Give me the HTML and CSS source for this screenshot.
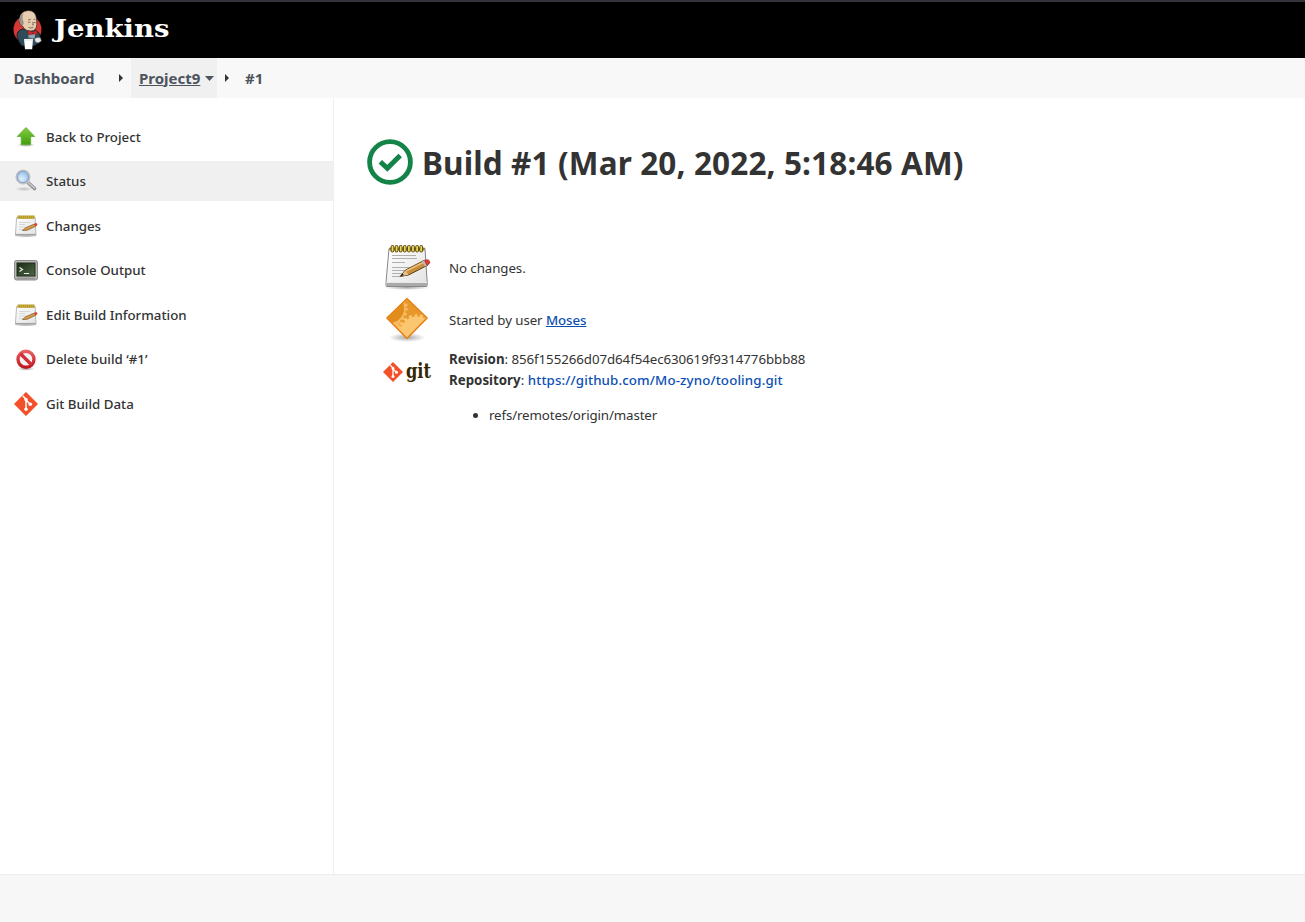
FILE: index.html
```
<!DOCTYPE html>
<html lang="en">
<head>
<meta charset="utf-8">
<title>Project9 #1 [Jenkins]</title>
<link rel="stylesheet" href="styles.css">
</head>
<body>
<svg class="defs" width="0" height="0" aria-hidden="true">
  <defs>
    <linearGradient id="paper" x1="0" y1="0" x2="1" y2="1"><stop offset="0" stop-color="#fff"/><stop offset="1" stop-color="#e2e2e2"/></linearGradient>
    <linearGradient id="green" x1="0" y1="0" x2="0" y2="1"><stop offset="0" stop-color="#84cf3c"/><stop offset="1" stop-color="#3f9c10"/></linearGradient>
    <radialGradient id="shadow"><stop offset="0" stop-color="#000" stop-opacity=".35"/><stop offset="1" stop-color="#000" stop-opacity="0"/></radialGradient>
    <linearGradient id="screen" x1="0" y1="0" x2="1" y2="1"><stop offset="0" stop-color="#1c2b18"/><stop offset="1" stop-color="#4e6846"/></linearGradient>
    <linearGradient id="red" x1="0" y1="0" x2="0" y2="1"><stop offset="0" stop-color="#e86060"/><stop offset="1" stop-color="#c01822"/></linearGradient>
    <radialGradient id="lens" cx=".4" cy=".65"><stop offset="0" stop-color="#e3effb"/><stop offset="1" stop-color="#a3c5ec"/></radialGradient>
    <clipPath id="diamond"><path d="M24 3.500L43 22 24 41.500 5 22z"/></clipPath>
    <symbol id="notepad" viewBox="0 0 24 24">
      <ellipse cx="12" cy="22" rx="12" ry="1.600" fill="url(#shadow)"/>
      <path d="M2.600 3.500h18.600l.8 17.800H1.400z" fill="url(#paper)" stroke="#aaa" stroke-width=".8"/>
      <path d="M1.600 20.500h20.200" stroke="#a3a3a3" stroke-width="1.200"/>
      <path d="M3.500 1.500h17v3.300h-17z" fill="#b59a24"/>
      <path d="M4.500 2v2.600M6.500 2v2.600M8.500 2v2.600M10.500 2v2.600M12.500 2v2.600M14.500 2v2.600M16.500 2v2.600M18.500 2v2.600" stroke="#cdb545" stroke-width=".7"/>
      <path d="M5 8.500h11M5 10.500h6M5 13h7M5 15.500h5" stroke="#d3d3d3" stroke-width=".9"/>
      <path d="M8.500 16.500l3.200-2.800 8.800-3.700 1.700 2-9 4.300z" fill="#d79a45" stroke="#7c5626" stroke-width=".7"/>
      <path d="M20 10l2-.9q1.700.7 1.400 1.900l-2 1.200z" fill="#dc3a32"/>
    </symbol>
  </defs>
</svg>
<header class="header">
  <svg class="butler" viewBox="0 0 40 50">
    <circle cx="19.500" cy="24.500" r="14" fill="#d33833"/>
    <path d="M9 31q0-6 6-7l12 1q5 2 5.500 8l-1.500 5-5 3H14l-3-4z" fill="#2f4a58" stroke="#151515" stroke-width=".8"/>
    <path d="M11.200 14q1-8 9-8.500 7.500 0 8.300 8l.3 6q-.3 6.500-5.800 6.500-6 .4-8.500-5-3.700-2-3.300-7z" fill="#e6cdb0" stroke="#2b2320" stroke-width=".7"/>
    <path d="M11.400 14q1-4 4-6-2 6 .5 9.500l-1.200 3.500q-3.500-2-3.300-7z" fill="#99938b"/>
    <path d="M20 15l3-.8m2.500.3l2-.3M20 17.200h2.500m3 .3h2M24.500 17l1 2.700-1.500.3M20.500 22.500q2.500 1 5 0" stroke="#5b483b" fill="none" stroke-width=".7"/>
    <path d="M20 29.500l4.500 0 3-1-1 5-6-1z" fill="#93a5b0"/>
    <path d="M20 25.300l4.500 2 4-2.200.6 4.800-4.400-1.300-4.700 1.500z" fill="#d8262a" stroke="#6c1915" stroke-width=".4"/>
    <path d="M16 34l9-.2-.8 10.500h-7.200z" fill="#fff"/><path d="M16.500 35h8" stroke="#c8c8c8" stroke-width=".6"/>
    <path d="M26.500 34q2.500-2.500 6-1l.8 3-2.800 1.700-3-.6z" fill="#e8e8e8" stroke="#777" stroke-width=".5"/>
  </svg>
  <span class="brand">Jenkins</span>
</header>
<nav class="crumbs">
  <a class="crumb home">Dashboard</a>
  <svg class="sep" viewBox="0 0 4 8"><path d="M0 0l4 4-4 4z"/></svg>
  <a class="crumb current"><span class="proj">Project9</span><svg class="caret" viewBox="0 0 9 5"><path d="M0 0h9L4.500 5z"/></svg></a>
  <svg class="sep s2" viewBox="0 0 4 8"><path d="M0 0l4 4-4 4z"/></svg>
  <a class="crumb num">#1</a>
</nav>
<div class="page">
  <aside class="side">
    <a class="task"><svg viewBox="0 0 24 24"><ellipse cx="12" cy="20" rx="9" ry="2" fill="url(#shadow)"/><path d="M12 2.500l8.700 9h-4v8.200H7.200v-8.200h-4z" fill="url(#green)" stroke="#5fa832" stroke-width=".8"/></svg><span>Back to Project</span></a>
    <a class="task active"><svg viewBox="0 0 24 24"><ellipse cx="10" cy="20" rx="9" ry="2.200" fill="url(#shadow)" opacity=".6"/><path d="M14.500 14l6 5.500" stroke="#8a8a8a" stroke-width="3.600" stroke-linecap="round"/><path d="M14.500 13.800l6 5.400" stroke="#c8c8c8" stroke-width="1.600" stroke-linecap="round"/><circle cx="9" cy="8" r="6.600" fill="url(#lens)" stroke="#c2c2c2" stroke-width="1.800"/><circle cx="9" cy="8" r="5.600" fill="none" stroke="#6d98cb" stroke-width=".8"/></svg><span>Status</span></a>
    <a class="task"><svg><use href="#notepad"/></svg><span>Changes</span></a>
    <a class="task"><svg viewBox="0 0 24 24"><rect x=".5" y="1.500" width="23" height="19.500" rx="2" fill="#b5b7b2" stroke="#777" stroke-width=".8"/><rect x="3" y="4" width="18" height="13" fill="url(#screen)" stroke="#20281c"/><path d="M5.500 8.500l3 2-3 2M10 14.500h5" fill="none" stroke="#eaf3e5" stroke-width="1.200"/><path d="M3 19.300h18" stroke="#8b8b8b"/></svg><span>Console Output</span></a>
    <a class="task"><svg><use href="#notepad"/></svg><span>Edit Build Information</span></a>
    <a class="task"><svg viewBox="0 0 24 24"><ellipse cx="12" cy="21" rx="9" ry="1.800" fill="url(#shadow)"/><circle cx="12" cy="11.300" r="8" fill="#f5f5f5" stroke="url(#red)" stroke-width="3.400"/><path d="M6.500 5.800l11 11" stroke="#d13038" stroke-width="3.400"/></svg><span>Delete build ‘#1’</span></a>
    <a class="task"><svg viewBox="0 0 24 24"><path d="M12 .3L23.700 12 12 23.700.3 12z" fill="#f34f29" stroke="#f34f29" stroke-width=".6" stroke-linejoin="round"/><path d="M8.700 3.800L12 7.100v10.400M12 8l4.300 4.300" fill="none" stroke="#fff" stroke-width="1.500"/><circle cx="12" cy="7.500" r="1.700" fill="#fff"/><circle cx="12" cy="17.300" r="1.800" fill="#fff"/><circle cx="16.300" cy="12.200" r="1.800" fill="#fff"/></svg><span>Git Build Data</span></a>
  </aside>
  <main class="main">
    <h1 class="title"><svg viewBox="0 0 46 46"><circle cx="23" cy="23" r="20.400" fill="none" stroke="#138347" stroke-width="4.800"/><path d="M13.300 22.700l7 6.600L33.200 16.500" fill="none" stroke="#138347" stroke-width="5"/></svg><span>Build #1 (Mar 20, 2022, 5:18:46 AM)</span></h1>
    <div class="rows">
      <div class="row"><svg viewBox="0 0 48 48">
        <ellipse cx="24" cy="43.500" rx="23" ry="2.500" fill="url(#shadow)"/>
        <path d="M6 4.500h36l2.200 34v3q0 1-1 1H4q-1 0-1-1v-3z" fill="url(#paper)" stroke="#888"/><path d="M3.500 38.500h40.500v3.500H3.500z" fill="#aaa"/><path d="M3.500 38.500h40.500" stroke="#e8e8e8"/>
        <path d="M6.500 3.500h35v3h-35z" fill="#8a7a30"/>
        <path d="M9.500 2.700v4M13.600 2.700v4M17.700 2.700v4M21.800 2.700v4M25.900 2.700v4M30 2.700v4M34.100 2.700v4M38.200 2.700v4" stroke="#58480b" stroke-width="3.600" stroke-linecap="round"/>
        <path d="M9.500 2.700v4M13.600 2.700v4M17.700 2.700v4M21.800 2.700v4M25.900 2.700v4M30 2.700v4M34.100 2.700v4M38.200 2.700v4" stroke="#ecd75c" stroke-width="1.800" stroke-linecap="round"/>
        <path d="M9 11.500h24M9 14.500h25M9 18.500h13M9 23.500h18M9 26.500h14M9 29.500h10M9 32.500h10" stroke="#b0b0b0"/>
        <path d="M17 32.500l5.500-6.500L41 16.500l4 4.500-19.500 10z" fill="#c78e3c" stroke="#5f3c12"/><path d="M23 27l17.500-8.800" stroke="#eec17b" stroke-width="1.600"/><path d="M17 32.500l5.500-6 3 4.300z" fill="#e4c28c"/><path d="M17 32.500l2.500-3 1.500 1.800z" fill="#222"/>
        <path d="M39 17.500l2.500-1.300 3 5-2.500 1.300z" fill="#bbb"/><path d="M41.500 16.200q5-1.700 5.300 2 0 2-3 3z" fill="#e23b39" stroke="#94201e" stroke-width=".6"/></svg><span class="nochanges">No changes.</span></div>
      <div class="row"><svg viewBox="0 0 48 48"><ellipse cx="24" cy="41.500" rx="18" ry="4.500" fill="url(#shadow)"/><path d="M24 2.500L44.200 22 24 42.500 3.800 22z" fill="#e8982a"/>
        <g clip-path="url(#diamond)">
          <circle cx="6" cy="12" r="16.500" fill="#e08d1c"/>
          <circle cx="6" cy="12" r="16" fill="none" stroke="#f7bd66" stroke-width="1.600"/>
          <circle cx="6" cy="12" r="17.500" fill="none" stroke="#f7bd66" stroke-width="2.400" stroke-dasharray="2.600 2.400"/>
          <path d="M4 22l6 5 4-1 4 4 2 12z" fill="#f8bb60"/>
          <circle cx="34" cy="38" r="17.500" fill="#fcc671"/><circle cx="34" cy="38" r="18.500" fill="none" stroke="#fcc671" stroke-width="2.600" stroke-dasharray="3 2.600"/>
        </g>
        <path d="M24 2.500L44.200 22 24 42.500 3.800 22z" fill="none" stroke="#e57e12" stroke-width="1.200" stroke-linejoin="round"/></svg><span class="started">Started by user <a class="moses">Moses</a></span></div>
      <div class="row r3"><div class="gitlogo"><svg viewBox="0 0 20 20"><path d="M10 0L20 10 10 20 0 10z" fill="#f34f29"/><path d="M7.300 3.300l2.700 2.700v9M10 7l3.300 3.300" fill="none" stroke="#fff" stroke-width="1.300"/><circle cx="10" cy="6.500" r="1.400" fill="#fff"/><circle cx="10" cy="14.500" r="1.500" fill="#fff"/><circle cx="13.500" cy="10.300" r="1.500" fill="#fff"/></svg><span class="gitword">git</span></div>
        <div class="rev"><div><b>Revision</b><span class="hash">: 856f155266d07d64f54ec630619f9314776bbb88</span></div><div><b>Repository</b>: <a class="repo">https://github.com/Mo-zyno/tooling.git</a></div><ul><li>refs/remotes/origin/master</li></ul></div></div>
    </div>
  </main>
</div>
<footer class="footer"></footer>
</body>
</html>
```
FILE: styles.css
```
* { box-sizing: border-box; }
body { margin: 0; min-height: 922px; display: flex; flex-direction: column; background: #fff; color: #333; font: 13.3px/21px "Noto Sans", "Open Sans", sans-serif; }
.defs { position: absolute; }
svg { display: block; flex: none; }
.header { height: 58px; background: #000; border-top: 2px solid #33333b; display: flex; align-items: center; padding-left: 8px; }
.butler { width: 40px; height: 50px; }
.brand { margin: -3px 0 0 6px; color: #fff; font: bold 25px/32px "DejaVu Serif", serif; transform: scaleX(1.1); transform-origin: left; }
.crumbs { height: 40px; background: #f8f8f8; display: flex; align-items: center; padding-left: 13.500px; color: #4d545d; font-size: 15px; font-weight: 700; }
.home { width: 105.500px; }
.sep { width: 4px; height: 8px; fill: #333; }
.current { margin-left: 8px; width: 86px; height: 40px; padding-left: 8px; background: #f0f0f0; display: flex; align-items: center; }
.proj { text-decoration: underline; }
.caret { width: 9px; height: 5px; margin-left: 4.500px; fill: #4d545d; }
.s2 { margin-left: 8px; }
.num { margin-left: 16px; }
.page { flex: 1; display: flex; }
.side { width: 334px; border-right: 1px solid #f0f0f0; padding-top: 19px; display: flex; flex-direction: column; gap: 4.5px; }
.task { height: 40px; padding-left: 14px; display: flex; align-items: center; gap: 8px; font-weight: 500; }
.task svg { width: 24px; height: 24px; }
.active { background: #f0f0f0; margin: -.1px 0 .1px; }
.main { flex: 1; padding: 41px 0 0 33px; }
.title { margin: 0; height: 46px; display: flex; align-items: center; gap: 9px; font-size: 31.5px; font-weight: 700; letter-spacing: .13px; }
.title svg { width: 46px; height: 46px; }
.title span { padding-top: 1px; }
.rows { padding: 57px 0 0 16px; }
.row { display: flex; align-items: center; gap: 18px; height: 52px; }
.row > svg { width: 48px; height: 48px; }
.nochanges { letter-spacing: -.08px; }
.started { letter-spacing: -.08px; }
.r3 { height: auto; align-items: flex-start; padding-top: 1px; }
.rev { padding-top: 2px; }
.rev ul { margin: 14px 0 0; padding-left: 40px; letter-spacing: -.12px; }
.hash { letter-spacing: -.07px; }
.moses { color: #0b4fb3; text-decoration: underline; font-weight: 500; }
.repo { color: #0b4fb3; font-weight: 500; letter-spacing: .13px; }
.gitlogo { width: 48px; height: 48px; display: flex; align-items: center; gap: 3px; }
.gitlogo svg { width: 20px; height: 20px; margin-top: 2px; }
.gitword { font: bold 20px/24px "DejaVu Serif", serif; color: #362701; transform: scaleX(.81); transform-origin: left; margin-top: -1px; }
.footer { height: 48px; background: #f7f7f7; border-top: 1px solid #eee; }
```
